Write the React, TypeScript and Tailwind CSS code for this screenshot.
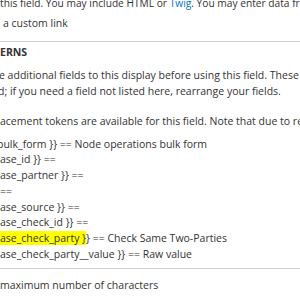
const tokens: { text: string; mark?: string; rest?: string; shift?: string }[] = [
  { text: "bulk_form }} == Node operations bulk form", shift: "-ml-[3px]" },
  { text: "ase_id }} ==" },
  { text: "ase_partner }} ==" },
  { text: "==" },
  { text: "ase_source }} ==" },
  { text: "ase_check_id }} ==" },
  { text: "", mark: "ase_check_party }", rest: "} == Check Same Two-Parties" },
  { text: "ase_check_party__value }} == Raw value" },
];

export default function App() {
  return (
    <div className="w-[300px] h-[300px] overflow-hidden bg-white text-[#333] font-['Open_Sans',sans-serif] text-[10.5px] leading-[15.7px] whitespace-nowrap">
      <div className="-mt-[4px] text-[10.2px]">
        this field. You may include HTML or{" "}
        <a className="text-[#0074bd]">Twig</a>. You may enter data from this view as per the "Replacement patterns" below.
      </div>
      <div className="mt-[4.5px] pl-[3px]">a custom link</div>
      <div className="mt-[9px] border-t border-[#d0d0d0]" />
      <div className="mt-[3px] font-bold uppercase">ERNS</div>

      <div className="mt-[7.5px]">
        <div className="-ml-px">
          e additional fields to this display before using this field. These fields may be marked as Exclude from display
        </div>
        <div className="-ml-[2px]">d; if you need a field not listed here, rearrange your fields.</div>
      </div>

      <div className="mt-[14.5px]">
        acement tokens are available for this field. Note that due to rendering order
      </div>

      <div className="mt-[7px]">
        {tokens.map((t, i) => (
          <div key={i} className={t.shift}>
            {t.mark ? (
              <>
                <span className="bg-[#ffff00]">{t.mark}</span>
                {t.rest}
              </>
            ) : (
              t.text
            )}
          </div>
        ))}
      </div>

      <div className="mt-[6px] border-t border-[#d0d0d0]" />
      <div className="mt-[9px]">maximum number of characters</div>
    </div>
  );
}
